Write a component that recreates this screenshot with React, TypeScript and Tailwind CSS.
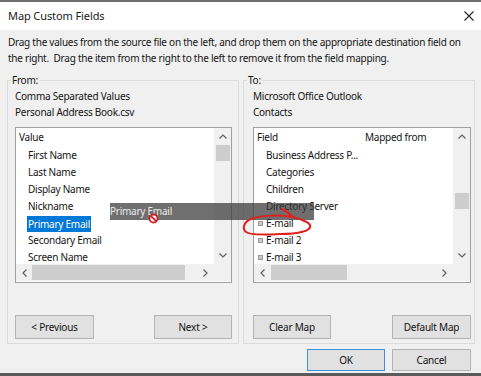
import React from 'react';

const ChevronUp = () => (
  <svg width="8" height="5" viewBox="0 0 8 5" className="block">
    <polyline points="0.5,4.5 4,1 7.5,4.5" fill="none" stroke="#606060" strokeWidth="1.2" />
  </svg>
);

const ChevronDown = () => (
  <svg width="8" height="5" viewBox="0 0 8 5" className="block">
    <polyline points="0.5,0.5 4,4 7.5,0.5" fill="none" stroke="#606060" strokeWidth="1.2" />
  </svg>
);

const ChevronLeft = () => (
  <svg width="5" height="8" viewBox="0 0 5 8" className="block">
    <polyline points="4.5,0.5 1,4 4.5,7.5" fill="none" stroke="#606060" strokeWidth="1.2" />
  </svg>
);

const ChevronRight = () => (
  <svg width="5" height="8" viewBox="0 0 5 8" className="block">
    <polyline points="0.5,0.5 4,4 0.5,7.5" fill="none" stroke="#606060" strokeWidth="1.2" />
  </svg>
);

const Expander = () => (
  <span className="inline-block w-[5px] h-[5px] border border-[#9a9a9a] bg-[#c8c8c8] mr-[3px] mb-[1px]" />
);

interface ListBoxProps {
  header: React.ReactNode;
  rows: React.ReactNode[];
  vThumbTop: number;
  hThumbLeft: number;
  hThumbWidth: number;
}

// list view with fake scrollbars, as drawn by the dialog
const ListBox: React.FC<ListBoxProps> = ({ header, rows, vThumbTop, hThumbLeft, hThumbWidth }) => (
  <div className="border border-[#a0a0a0] bg-white h-[156px] flex flex-col">
    <div className="flex h-[136px]">
      <div className="flex-1 overflow-hidden">
        <div className="h-[19px] flex items-center">{header}</div>
        {rows.map((r, i) => (
          <div key={i} className="h-[17px] flex items-center">
            {r}
          </div>
        ))}
      </div>
      <div className="w-[17px] bg-[#f0f0f0] flex flex-col items-center">
        <div className="h-[17px] flex items-center justify-center">
          <ChevronUp />
        </div>
        <div className="flex-1 w-full relative">
          <div className="absolute left-[2px] right-[1px] h-[16px] bg-[#cdcdcd]" style={{ top: vThumbTop }} />
        </div>
        <div className="h-[17px] flex items-center justify-center">
          <ChevronDown />
        </div>
      </div>
    </div>
    <div className="flex h-[17px]">
      <div className="flex-1 bg-[#f0f0f0] flex items-center relative">
        <div className="w-[17px] h-full flex items-center justify-center">
          <ChevronLeft />
        </div>
        <div className="absolute top-[1px] bottom-[1px] bg-[#cdcdcd]" style={{ left: hThumbLeft, width: hThumbWidth }} />
        <div className="ml-auto w-[17px] h-full flex items-center justify-center">
          <ChevronRight />
        </div>
      </div>
      <div className="w-[17px] bg-[#f0f0f0]" />
    </div>
  </div>
);

const Btn: React.FC<{ label: string; w: string; h?: string; primary?: boolean }> = ({ label, w, h = 'h-[24px]', primary }) => (
  <button
    className={`${w} ${h} bg-[#e1e1e1] text-[10px] tracking-[-0.2px] text-[#111] ${
      primary ? 'border border-[#3c8fdc]' : 'border border-[#b4b4b4]'
    }`}
  >
    {label}
  </button>
);

export default function App() {
  const leftRows = [
    'First Name',
    'Last Name',
    'Display Name',
    'Nickname',
    'Primary Email',
    'Secondary Email',
    'Screen Name',
  ].map((t) =>
    t === 'Primary Email' ? (
      <span className="ml-[11px] px-[1px] bg-[#0078d7] text-white leading-[16px]">{t}</span>
    ) : (
      <span className="ml-[12px]">{t}</span>
    )
  );

  const rightRows = [
    <span className="ml-[12px]">Business Address P...</span>,
    <span className="ml-[12px]">Categories</span>,
    <span className="ml-[12px]">Children</span>,
    <span className="ml-[12px]">Directory Server</span>,
    <span className="ml-[4px] flex items-center"><Expander />E-mail</span>,
    <span className="ml-[4px] flex items-center"><Expander />E-mail 2</span>,
    <span className="ml-[4px] flex items-center"><Expander />E-mail 3</span>,
  ];

  return (
    <div
      className="relative w-[481px] h-[376px] bg-[#f0f0f0] flex flex-col text-[10px] tracking-[-0.25px] text-[#141414] border-t-2 border-t-[#6f6f6f] border-b-[3px] border-b-[#5a5a5a] overflow-hidden"
      style={{ fontFamily: '"Noto Sans", "Open Sans", sans-serif' }}
    >
      {/* Title bar */}
      <div className="h-[28px] bg-white flex items-center justify-between pl-[8px] pr-[7px] shrink-0">
        <span className="text-[11px] tracking-[-0.1px] text-[#1a1a1a]">Map Custom Fields</span>
        <svg width="10" height="10" viewBox="0 0 10 10">
          <path d="M0.5 0.5 L9.5 9.5 M9.5 0.5 L0.5 9.5" stroke="#222" strokeWidth="1.1" />
        </svg>
      </div>

      {/* Instructions */}
      <div className="h-[38px] pt-[4px] pl-[8px] leading-[16px] whitespace-pre shrink-0">
        Drag the values from the source file on the left, and drop them on the appropriate destination field on
        <br />
        the right.  Drag the item from the right to the left to remove it from the field mapping.
      </div>

      {/* Group boxes */}
      <div className="flex gap-[4px] pl-[7px] mt-[4px] shrink-0">
        <fieldset className="w-[232px] h-[272px] border border-[#dcdcdc] flex flex-col">
          <legend className="ml-[3px] px-[1px] leading-[16px]">From:</legend>
          <div className="flex flex-col flex-1 pl-[7px] pr-[6px] pb-[4px]">
            <div className="leading-[16px]">Comma Separated Values</div>
            <div className="leading-[16px]">Personal Address Book.csv</div>
            <div className="mt-[7px]">
              <ListBox
                header={<span className="ml-[3px]">Value</span>}
                rows={leftRows}
                vThumbTop={0}
                hThumbLeft={16}
                hThumbWidth={153}
              />
            </div>
            <div className="mt-auto flex justify-between">
              <Btn label="< Previous" w="w-[79px]" />
              <Btn label="Next >" w="w-[78px]" />
            </div>
          </div>
        </fieldset>

        <fieldset className="w-[232px] h-[272px] border border-[#dcdcdc] flex flex-col">
          <legend className="ml-[3px] px-[1px] leading-[16px]">To:</legend>
          <div className="flex flex-col flex-1 pl-[9px] pr-[3px] pb-[4px]">
            <div className="leading-[16px]">Microsoft Office Outlook</div>
            <div className="leading-[16px]">Contacts</div>
            <div className="mt-[7px]">
              <ListBox
                header={
                  <div className="flex">
                    <span className="ml-[3px] w-[108px]">Field</span>
                    <span>Mapped from</span>
                  </div>
                }
                rows={rightRows}
                vThumbTop={48}
                hThumbLeft={17}
                hThumbWidth={76}
              />
            </div>
            <div className="mt-auto flex justify-between">
              <Btn label="Clear Map" w="w-[78px]" />
              <Btn label="Default Map" w="w-[79px]" />
            </div>
          </div>
        </fieldset>
      </div>

      {/* Dialog buttons */}
      <div className="flex justify-end gap-[7px] pr-[10px] mt-[5px]">
        <Btn label="OK" w="w-[78px]" h="h-[22px]" primary />
        <Btn label="Cancel" w="w-[79px]" h="h-[22px]" />
      </div>

      {/* Drag ghost */}
      <div className="absolute left-[110px] top-[201px] w-[204px] h-[17px] bg-[rgba(55,55,55,0.72)] text-[#ececec] leading-[17px]">
        Primary Email
      </div>
      <svg className="absolute left-[148px] top-[211px]" width="11" height="11" viewBox="0 0 11 11">
        <circle cx="5.5" cy="5.5" r="4" fill="#fff" stroke="#d42020" strokeWidth="1.8" />
        <path d="M2.8 2.8 L8.2 8.2" stroke="#d42020" strokeWidth="1.8" />
      </svg>

      {/* Red annotation */}
      <svg className="absolute left-[240px] top-[198px]" width="80" height="42" viewBox="0 0 80 42">
        <path
          d="M42 9 C46 11, 50 14, 53 17 C60 19, 68 21, 70 25 C72 31, 58 34, 40 34 C24 35, 8 35, 5 31 C2 27, 5 20, 14 18 C24 15, 40 15, 52 17"
          fill="none"
          stroke="#e0201c"
          strokeWidth="2"
          strokeLinecap="round"
        />
      </svg>
    </div>
  );
}
